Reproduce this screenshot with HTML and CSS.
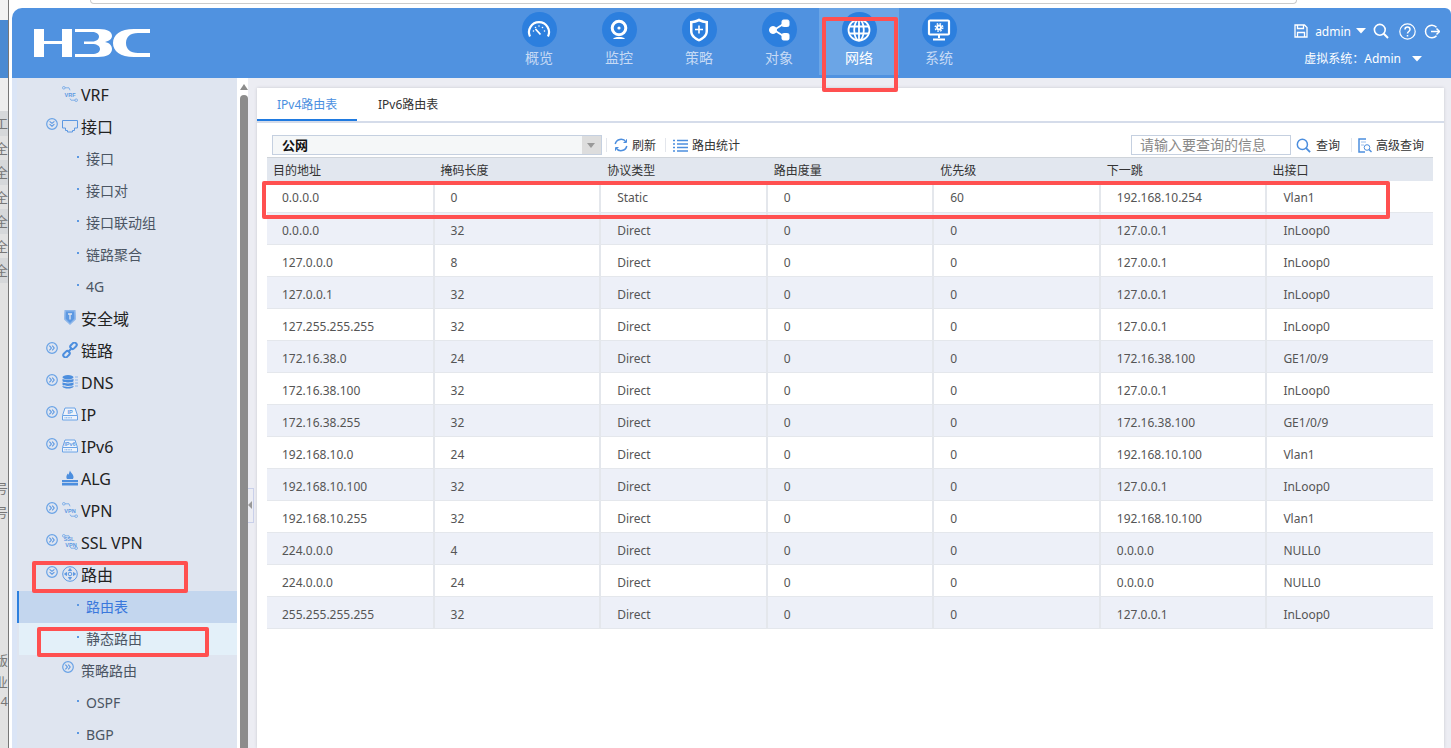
FILE: index.html
```html
<!DOCTYPE html>
<html>
	<head>
		<meta charset="UTF-8">
		<title>路由表</title>
		<link rel="stylesheet" href="styles.css">
	</head>
	<body>
		<svg class="defs" width="0" height="0">
			<symbol id="open" viewBox="0 0 12 12">
				<circle cx="6" cy="6" r="5.3" fill="none" stroke="#6aa3e6" stroke-width="1.2"/>
				<path d="M3.6 3.4 6 5.4l2.400-2M3.6 6.200 6 8.200l2.400-2" fill="none" stroke="#5c98e2" stroke-width="1.100"/>
			</symbol>
			<symbol id="closed" viewBox="0 0 12 12">
				<circle cx="6" cy="6" r="5.3" fill="none" stroke="#6aa3e6" stroke-width="1.2"/>
				<path d="M3.4 3.6 5.4 6l-2 2.400M6.200 3.600 8.200 6l-2 2.400" fill="none" stroke="#5c98e2" stroke-width="1.100"/>
			</symbol>
			<symbol id="ic-search" viewBox="0 0 16 16">
				<circle cx="6.800" cy="6.800" r="5.400" fill="none" stroke="currentColor" stroke-width="1.600"/>
				<path d="m10.800 10.800 4.200 4.200" stroke="currentColor" stroke-width="2"/>
			</symbol>
			<symbol id="caret" viewBox="0 0 10 6">
				<path d="M0 0h10L5 5.500z" fill="#fff"/>
			</symbol>
			<symbol id="ic-drive" viewBox="0 0 16 14">
				<path d="M3 1h10l2.500 7.500v4.500H.5V8.500z" fill="#eef3fb" stroke="#6aa3e6"/>
				<path d="M.8 8.500h14.400" stroke="#6aa3e6"/>
				<path d="M2.500 10.800h8" stroke="#6aa3e6" stroke-dasharray="1 .6"/>
			</symbol>
			<symbol id="ic-tag" viewBox="0 0 16 16">
				<circle cx="1.800" cy="1.800" r="1.300" fill="none" stroke="#6aa3e6" stroke-width=".8"/>
				<circle cx="14.200" cy="14.200" r="1.300" fill="none" stroke="#6aa3e6" stroke-width=".8"/>
				<path d="M3 1.800h4l1 2.500M8 12.500l1 1.700h4" fill="none" stroke="#6aa3e6" stroke-width=".8"/>
			</symbol>
		</svg>

		<div class="desk">
			<div class="desk-tabs"></div>
			<div class="desk-blue"></div>
			<div class="desk-gap"></div>
			<div class="desk-row desk-alt">工</div>
			<div class="desk-row">全</div>
			<div class="desk-row desk-alt">全</div>
			<div class="desk-row">全</div>
			<div class="desk-row desk-alt">全</div>
			<div class="desk-row">全</div>
			<div class="desk-row desk-alt">全</div>
			<div class="desk-blank"></div>
			<div class="desk-row">号</div>
			<div class="desk-row desk-tall">号</div>
			<div class="desk-blank2"></div>
			<div class="desk-row">版</div>
			<div class="desk-row desk-low">业</div>
			<div class="desk-row desk-low">4</div>
		</div>

		<div class="shell">
			<div class="urlbar"></div>

			<div class="header">
				<div class="logo">
					<svg width="118" height="30" viewBox="0 0 118 30">
						<path fill="#fff" d="M0 1h10v12h18V1h10v28H28V16H10v13H0z"/>
						<path fill="#fff" d="M41 1H65C74 1 78 4 78 8C78 11 75 13 71 14C76 15 78 18 78 21C78 26 73 29 64 29H41V26H58C63 26 66 24 66 21C66 18 63 16 58 16H50V13.500H58C63 13.500 65 11 65 8.500C65 6 62 4 58 4H41Z"/>
						<path fill="#fff" d="M116 1H100C86 1 79 7 79 15C79 23 86 29 100 29H116V25H104C96 25 92 21 92 15C92 9 96 5 104 5H116Z"/>
					</svg>
				</div>
				<div class="nav">
					<div class="nav-item">
						<span class="nav-ball">
							<svg width="24" height="24" viewBox="0 0 24 24" fill="none" stroke="#fff">
								<path d="M3 18.500a10 10 0 1 1 18 0" stroke-width="2.200"/>
								<path d="M6.500 13h.01M8.500 9.500h.01M12 8h.01M15.500 9.500h.01M17.500 13h.01" stroke-width="1.600" stroke-linecap="round"/>
								<path d="m8.500 11 5 5.500" stroke-width="1.800"/>
							</svg>
						</span>
						<span>概览</span>
					</div>
					<div class="nav-item">
						<span class="nav-ball">
							<svg width="24" height="24" viewBox="0 0 24 24" fill="none" stroke="#fff">
								<circle cx="12" cy="10" r="6.800" stroke-width="3"/>
								<circle cx="12" cy="10" r="1.600" fill="#fff" stroke="none"/>
								<path d="M6 21c1-1.600 3-2 6-2s5 .4 6 2z" fill="#fff" stroke="none"/>
							</svg>
						</span>
						<span>监控</span>
					</div>
					<div class="nav-item">
						<span class="nav-ball">
							<svg width="24" height="26" viewBox="0 0 24 26" fill="none" stroke="#fff">
								<path d="M12 1.500c3 1.600 6 2.400 9 2.500v10c0 5-4 8.500-9 10.500-5-2-9-5.500-9-10.500V4c3-.1 6-.9 9-2.500z" fill="#fff" stroke="none"/>
								<path d="M12 4.500c2.300 1 4.500 1.600 6.500 1.800v8c0 3.500-3 6-6.500 7.700-3.500-1.700-6.500-4.200-6.500-7.700v-8c2-.2 4.200-.8 6.500-1.800z" fill="#2c7fde" stroke="none"/>
								<path d="M12 8.500v8M8 12.500h8" stroke-width="1.600"/>
							</svg>
						</span>
						<span>策略</span>
					</div>
					<div class="nav-item">
						<span class="nav-ball">
							<svg width="24" height="24" viewBox="0 0 24 24" fill="#fff" stroke="#fff">
								<path d="m7 12 11-7M7 12l11 7" stroke-width="1.800" fill="none"/>
								<circle cx="6" cy="12" r="3.500"/>
								<rect x="15" y="2" width="7" height="6.500" rx="1.500"/>
								<rect x="15" y="15.500" width="7" height="6.500" rx="1.500"/>
							</svg>
						</span>
						<span>对象</span>
					</div>
					<div class="nav-item nav-on">
						<span class="nav-ball">
							<svg width="24" height="24" viewBox="0 0 24 24" fill="none" stroke="#fff" stroke-width="1.800">
								<circle cx="12" cy="12" r="10.500"/>
								<ellipse cx="12" cy="12" rx="4.800" ry="10.500"/>
								<path d="M12 1.500v21M2 8.500h20M2 15.500h20"/>
							</svg>
						</span>
						<span>网络</span>
					</div>
					<div class="nav-item">
						<span class="nav-ball">
							<svg width="24" height="24" viewBox="0 0 24 24" fill="none" stroke="#fff">
								<rect x="2" y="2.500" width="20" height="14" rx="1" stroke-width="2.200"/>
								<path d="M12 16.500v3.500M6 21.500h12" stroke-width="2"/>
								<circle cx="12" cy="9.500" r="2" stroke-width="2"/>
								<circle cx="12" cy="9.500" r="3.800" stroke-width="1.400" stroke-dasharray="1.600 1.400"/>
							</svg>
						</span>
						<span>系统</span>
					</div>
				</div>
				<div class="user">
					<div class="user-top">
						<svg class="user-save" width="14" height="14" viewBox="0 0 14 14" fill="none" stroke="#fff" stroke-width="1.300">
							<path d="M1 1h9.500L13 3.500V13H1z"/>
							<path d="M3.500 1v3.500h6V1M3.500 13V8.500h7V13"/>
						</svg>
						<span class="user-name">admin</span>
						<svg class="user-caret" width="10" height="6"><use href="#caret"/></svg>
						<svg class="user-find" width="16" height="16"><use href="#ic-search"/></svg>
						<svg class="user-help" width="17" height="17" viewBox="0 0 17 17" fill="none" stroke="#fff" stroke-width="1.200">
							<circle cx="8.500" cy="8.500" r="7.700"/>
							<path d="M6 6.500c0-3.200 5-3.200 5 0 0 2-2.500 2-2.500 4" stroke-width="1.500"/>
							<path d="M8.500 12v1.500" stroke-width="1.500"/>
						</svg>
						<svg class="user-out" width="16" height="15" viewBox="0 0 16 15" fill="none" stroke="#fff" stroke-width="1.500">
							<path d="M12.500 3.300A6.300 6.300 0 1 0 12.500 11.700"/>
							<path d="M7 7.500h8.500"/>
							<path d="M12.500 4.500l3 3-3 3"/>
						</svg>
					</div>
					<div class="user-vsys">
						<span>虚拟系统：Admin</span>
						<svg width="10" height="6"><use href="#caret"/></svg>
					</div>
				</div>
			</div>

			<div class="work">
				<div class="side">
					<div class="tree-row">
						<span class="tog"></span>
						<svg class="ico" width="16" height="16" viewBox="0 0 16 16">
							<use href="#ic-tag" width="16" height="16"/>
							<text class="ico-text" x="8" y="10.500">VRF</text>
						</svg>
						<span>VRF</span>
					</div>
					<div class="tree-row">
						<svg class="tog" width="12" height="12"><use href="#open"/></svg>
						<svg class="ico" width="16" height="14" viewBox="0 0 16 14" fill="none" stroke="#5c98e2">
							<path d="M.5 1.500h15v7.500h-3v2.500h-2v1.500h-5v-1.500h-2V9h-3z"/>
						</svg>
						<span>接口</span>
					</div>
					<div class="sub-row"><i></i>接口</div>
					<div class="sub-row"><i></i>接口对</div>
					<div class="sub-row"><i></i>接口联动组</div>
					<div class="sub-row"><i></i>链路聚合</div>
					<div class="sub-row"><i></i>4G</div>
					<div class="tree-row">
						<span class="tog"></span>
						<svg class="ico" width="16" height="17" viewBox="0 0 16 17">
							<path d="M2.500 1h11c.4 3 .4 7 .4 9.500L8 16l-5.900-5.500C2.100 8 2.100 4 2.500 1z" fill="#8db6ea"/>
							<path d="M4 2.500h8c.3 2.500.3 5.500.3 7.300L8 14l-4.300-4.200C3.700 8 3.700 5 4 2.500z" fill="#5c98e2"/>
							<path d="M6 5h4M8 5v5.500" stroke="#dfe5f0" stroke-width="1.300"/>
						</svg>
						<span>安全域</span>
					</div>
					<div class="tree-row">
						<svg class="tog" width="12" height="12"><use href="#closed"/></svg>
						<svg class="ico" width="16" height="16" viewBox="0 0 16 16" fill="none" stroke="#4c8ede" stroke-width="2">
							<rect x="8" y="1.500" width="7" height="4.500" rx="2" transform="rotate(-45 11.500 3.750)"/>
							<rect x="1" y="10" width="7" height="4.500" rx="2" transform="rotate(-45 4.500 12.250)"/>
							<path d="m6 10 4-4"/>
						</svg>
						<span>链路</span>
					</div>
					<div class="tree-row">
						<svg class="tog" width="12" height="12"><use href="#closed"/></svg>
						<svg class="ico" width="16" height="14" viewBox="0 0 16 14" fill="#4c8ede">
							<ellipse cx="6" cy="2.300" rx="5.500" ry="2.200"/>
							<path d="M.5 3.800c1 1.500 10 1.500 11 0v2.400c-1 1.600-10 1.600-11 0zM.5 7.300c1 1.500 10 1.500 11 0v2.400c-1 1.600-10 1.600-11 0zM.5 10.800c1 1.500 10 1.500 11 0v.9c-1 2.400-10 2.400-11 0z"/>
							<path d="M13 2h3M13 5h3M13 8h3M13 11h3" stroke="#8db6ea" stroke-width="1.200"/>
						</svg>
						<span>DNS</span>
					</div>
					<div class="tree-row">
						<svg class="tog" width="12" height="12"><use href="#closed"/></svg>
						<svg class="ico" width="16" height="14" viewBox="0 0 16 14">
							<use href="#ic-drive" width="16" height="14"/>
							<text class="ico-text" x="8" y="7">IP</text>
						</svg>
						<span>IP</span>
					</div>
					<div class="tree-row">
						<svg class="tog" width="12" height="12"><use href="#closed"/></svg>
						<svg class="ico" width="16" height="14" viewBox="0 0 16 14">
							<use href="#ic-drive" width="16" height="14"/>
							<text class="ico-text" x="8" y="7">IPv6</text>
						</svg>
						<span>IPv6</span>
					</div>
					<div class="tree-row">
						<span class="tog"></span>
						<svg class="ico" width="16" height="16" viewBox="0 0 16 16" fill="#4c8ede">
							<path d="M8 .5c.5 2 3.500 3.500 3.500 6.500 0 1-.3 1.500-.6 2H5c-.3-.5-.6-1-.6-2 0-1.500.9-2.500 1.300-3.500.4.600.6 1 .9 1.300C6.800 3.500 7.600 2 8 .5z"/>
							<path d="M0 10h16v2.300H0zM0 13h16v2.500H0z"/>
						</svg>
						<span>ALG</span>
					</div>
					<div class="tree-row">
						<svg class="tog" width="12" height="12"><use href="#closed"/></svg>
						<svg class="ico" width="16" height="16" viewBox="0 0 16 16">
							<use href="#ic-tag" width="16" height="16"/>
							<text class="ico-text" x="8" y="10.500">VPN</text>
						</svg>
						<span>VPN</span>
					</div>
					<div class="tree-row">
						<svg class="tog" width="12" height="12"><use href="#closed"/></svg>
						<svg class="ico" width="16" height="16" viewBox="0 0 16 16">
							<use href="#ic-tag" width="16" height="16"/>
							<text class="ico-text" x="7" y="7">SSL</text>
							<text class="ico-text" x="9" y="12.500">VPN</text>
						</svg>
						<span>SSL VPN</span>
					</div>
					<div class="tree-row">
						<svg class="tog" width="12" height="12"><use href="#open"/></svg>
						<svg class="ico" width="16" height="16" viewBox="0 0 16 16" fill="none" stroke="#5c98e2">
							<circle cx="8" cy="8" r="7.300"/>
							<path d="M8 2.500 9.500 4.500h-3zM8 13.500 6.500 11.500h3zM2.500 8 4.500 6.500v3zM13.500 8 11.500 9.500v-3z" fill="#5c98e2"/>
							<circle cx="8" cy="8" r="1.800"/>
						</svg>
						<span>路由</span>
					</div>
					<div class="sub-row sub-on"><i></i>路由表</div>
					<div class="sub-row sub-near"><i></i>静态路由</div>
					<div class="group-row">
						<svg class="tog" width="12" height="12"><use href="#closed"/></svg>
						<span>策略路由</span>
					</div>
					<div class="sub-row"><i></i>OSPF</div>
					<div class="sub-row"><i></i>BGP</div>
				</div>

				<div class="bar">
					<div class="bar-up"></div>
					<div class="bar-thumb"></div>
				</div>

				<div class="main">
					<div class="card">
						<div class="tabs">
							<div class="tab tab-on">IPv4路由表</div>
							<div class="tab">IPv6路由表</div>
						</div>
						<div class="tools">
							<div class="pick">
								<span class="pick-text">公网</span>
								<span class="pick-btn"></span>
							</div>
							<span class="sep"></span>
							<svg class="tool-ico" width="14" height="14" viewBox="0 0 14 14" fill="none" stroke="#4c8ede" stroke-width="1.500">
								<path d="M1.200 6A6 6 0 0 1 12 4M12.800 8A6 6 0 0 1 2 10"/>
								<path d="M12.500 1.300V4.500H9.500M1.500 12.700V9.500h3" stroke-width="1"/>
							</svg>
							<span class="tool">刷新</span>
							<span class="sep"></span>
							<svg class="tool-ico" width="15" height="13" viewBox="0 0 15 13" stroke="#4c8ede" stroke-width="1.400">
								<path d="M0 1.500h2M0 5h2M0 8.500h2M0 12h2M4 1.500h11M4 5h11M4 8.500h11M4 12h11"/>
							</svg>
							<span class="tool">路由统计</span>
							<span class="tools-gap"></span>
							<div class="find">请输入要查询的信息</div>
							<svg class="find-ico" width="15" height="15"><use href="#ic-search"/></svg>
							<span class="tool">查询</span>
							<span class="sep sep-r"></span>
							<svg class="tool-ico" width="14" height="15" viewBox="0 0 14 15" fill="none" stroke="#4c8ede">
								<path d="M8 1H1v13h6" stroke-width="1.500"/>
								<path d="M3 4h5M3 7h3" stroke="#9cc0ee"/>
								<circle cx="9" cy="9.500" r="2.800"/>
								<path d="m11 11.500 2.500 2.500" stroke-width="1.400"/>
							</svg>
							<span class="tool">高级查询</span>
						</div>
						<table class="grid">
							<thead>
								<tr><th>目的地址</th><th>掩码长度</th><th>协议类型</th><th>路由度量</th><th>优先级</th><th>下一跳</th><th>出接口</th></tr>
							</thead>
							<tbody>
								<tr><td>0.0.0.0</td><td>0</td><td>Static</td><td>0</td><td>60</td><td>192.168.10.254</td><td>Vlan1</td></tr>
								<tr><td>0.0.0.0</td><td>32</td><td>Direct</td><td>0</td><td>0</td><td>127.0.0.1</td><td>InLoop0</td></tr>
								<tr><td>127.0.0.0</td><td>8</td><td>Direct</td><td>0</td><td>0</td><td>127.0.0.1</td><td>InLoop0</td></tr>
								<tr><td>127.0.0.1</td><td>32</td><td>Direct</td><td>0</td><td>0</td><td>127.0.0.1</td><td>InLoop0</td></tr>
								<tr><td>127.255.255.255</td><td>32</td><td>Direct</td><td>0</td><td>0</td><td>127.0.0.1</td><td>InLoop0</td></tr>
								<tr><td>172.16.38.0</td><td>24</td><td>Direct</td><td>0</td><td>0</td><td>172.16.38.100</td><td>GE1/0/9</td></tr>
								<tr><td>172.16.38.100</td><td>32</td><td>Direct</td><td>0</td><td>0</td><td>127.0.0.1</td><td>InLoop0</td></tr>
								<tr><td>172.16.38.255</td><td>32</td><td>Direct</td><td>0</td><td>0</td><td>172.16.38.100</td><td>GE1/0/9</td></tr>
								<tr><td>192.168.10.0</td><td>24</td><td>Direct</td><td>0</td><td>0</td><td>192.168.10.100</td><td>Vlan1</td></tr>
								<tr><td>192.168.10.100</td><td>32</td><td>Direct</td><td>0</td><td>0</td><td>127.0.0.1</td><td>InLoop0</td></tr>
								<tr><td>192.168.10.255</td><td>32</td><td>Direct</td><td>0</td><td>0</td><td>192.168.10.100</td><td>Vlan1</td></tr>
								<tr><td>224.0.0.0</td><td>4</td><td>Direct</td><td>0</td><td>0</td><td>0.0.0.0</td><td>NULL0</td></tr>
								<tr><td>224.0.0.0</td><td>24</td><td>Direct</td><td>0</td><td>0</td><td>0.0.0.0</td><td>NULL0</td></tr>
								<tr><td>255.255.255.255</td><td>32</td><td>Direct</td><td>0</td><td>0</td><td>127.0.0.1</td><td>InLoop0</td></tr>
							</tbody>
						</table>
					</div>
				</div>
			</div>
		</div>

		<div class="fold"></div>

		<!-- red boxes drawn on top of the screenshot -->
		<div class="mark mark-nav"></div>
		<div class="mark mark-row"></div>
		<div class="mark mark-route"></div>
		<div class="mark mark-static"></div>
	</body>
</html>
```

FILE: styles.css
```css
html, body {
	height: 100%;
}

body {
	margin: 0;
	display: flex;
	height: 748px;
	overflow: hidden;
	background-color: #fff;
	font-family: "Noto Sans", "Noto Sans CJK SC", sans-serif;
	font-size: 12px;
	color: #444;
}

.defs {
	position: absolute;
}

/* window behind, only a sliver of it shows */
.desk {
	flex: none;
	width: 8px;
	border-right: 1px solid #777;
	overflow: hidden;
	background-color: #e2e2e2;
	color: #777;
}
.desk-tabs {
	height: 20px;
	background-color: #f2f2f2;
}
.desk-blue {
	height: 58px;
	background-color: #4a8ad2;
}
.desk-gap {
	height: 33px;
	background-color: #eee;
}
.desk-row {
	display: flex;
	justify-content: flex-end;
	height: 24.5px;
	line-height: 24.5px;
	font-size: 13px;
	white-space: nowrap;
}
.desk-alt {
	background-color: #d6d8da;
}
.desk-tall {
	height: 28px;
}
.desk-low {
	height: 19px;
	line-height: 19px;
}
.desk-blank {
	height: 193px;
}
.desk-blank2 {
	height: 120px;
}

.shell {
	flex: 1;
	min-width: 0;
	display: flex;
	flex-direction: column;
	padding-left: 3px;
}

.urlbar {
	flex: none;
	height: 3px;
	margin: 0 154px 4px 78px;
	border: 1px solid #ccc;
	border-top: none;
	border-radius: 0 0 8px 8px;
}

.header {
	flex: none;
	display: flex;
	height: 70px;
	background-color: #5092e0;
	border-radius: 10px 6px 0 0;
}

.logo {
	width: 487px;
	padding: 20px 0 0 22px;
	box-sizing: border-box;
}

.nav {
	display: flex;
}
.nav-item {
	display: flex;
	flex-direction: column;
	align-items: center;
	width: 80px;
	height: 67px;
	padding-top: 4px;
	box-sizing: border-box;
	font-size: 14px;
	line-height: 20px;
	color: #c6daf5;
}
.nav-on {
	background-color: #6ba5e6;
	color: #fff;
}
.nav-ball {
	display: flex;
	align-items: center;
	justify-content: center;
	width: 35px;
	height: 35px;
	margin-bottom: 1px;
	border-radius: 50%;
	background-color: #2c7fde;
}

.user {
	flex: 1;
	display: flex;
	flex-direction: column;
	align-items: flex-end;
	color: #fff;
}
.user-top {
	display: flex;
	align-items: center;
	height: 18px;
	margin-top: 14px;
	padding-right: 11px;
}
.user-name {
	margin: 0 5px 0 7px;
}
.user-caret {
	margin-right: 7px;
}
.user-find {
	color: #fff;
	margin-right: 10px;
}
.user-help {
	margin-right: 8px;
}
.user-vsys {
	display: flex;
	align-items: center;
	gap: 11px;
	margin-top: 10px;
	padding-right: 29px;
	line-height: 18px;
}

.work {
	flex: 1;
	min-height: 0;
	display: flex;
}

.side {
	flex: none;
	width: 220px;
	border-left: 5px solid #dbe5f6;
	overflow: hidden;
	background-color: #dfe5f0;
	padding-top: 1px;
}

.tree-row {
	display: flex;
	align-items: center;
	height: 32px;
	padding-left: 29px;
	font-size: 16px;
	line-height: 20px;
	color: #222;
}
.tog {
	flex: none;
	width: 12px;
	height: 12px;
	margin: -7px 4px 0 0;
}
.ico {
	flex: none;
	margin-right: 3px;
	margin-top: -3px;
}
.ico-text {
	font-family: "Liberation Sans", sans-serif;
	font-size: 5.5px;
	font-weight: bold;
	text-anchor: middle;
	fill: #5c98e2;
}
.sub-row {
	display: flex;
	align-items: center;
	height: 32px;
	box-sizing: border-box;
	padding: 0 0 1px 60px;
	font-size: 14px;
	line-height: 20px;
	color: #4b5563;
}
.sub-row i {
	width: 2px;
	height: 2px;
	margin-right: 7px;
	margin-top: -3px;
	background-color: #5c98e2;
}
.sub-on {
	border-left: 2px solid #2c7fde;
	padding-left: 58px;
	background-color: #c3d6ee;
	color: #3a78dc;
}
.sub-near {
	margin-left: 2px;
	padding-left: 58px;
	background-color: #e3f0f9;
}
.group-row {
	display: flex;
	align-items: center;
	height: 32px;
	box-sizing: border-box;
	padding: 0 0 1px 45px;
	font-size: 14px;
	line-height: 20px;
	color: #4b5563;
}
.group-row .tog {
	margin-right: 7px;
}

.bar {
	flex: none;
	width: 11px;
	box-sizing: border-box;
	padding-left: 3px;
	background-color: #fff;
}
.bar-up {
	width: 0;
	height: 0;
	margin: 6px 0 5px;
	border-left: 4px solid transparent;
	border-right: 4px solid transparent;
	border-bottom: 6px solid #8c8c8c;
}
.bar-thumb {
	height: 660px;
	border-radius: 4px 4px 0 0;
	background-color: #8c8c8c;
}

.main {
	flex: 1;
	min-width: 0;
	padding: 10px 7px 0 9px;
	background-color: #ecedf3;
}
.card {
	height: 100%;
	background-color: #fff;
	box-shadow: 0 0 3px #c8c8d0;
}

.tabs {
	display: flex;
	height: 33px;
	border-bottom: 2px solid #d5dcea;
}
.tab {
	width: 100px;
	height: 33px;
	box-sizing: border-box;
	padding-left: 20px;
	line-height: 33px;
	color: #333;
}
.tab-on {
	border-bottom: 2px solid #1f7ae0;
	color: #4a8fe0;
}
.tab + .tab {
	padding-left: 21px;
}

.tools {
	display: flex;
	align-items: center;
	height: 20px;
	margin: 12px 20px 2px 15px;
	color: #333;
}
.pick {
	display: flex;
	width: 330px;
	height: 20px;
	box-sizing: border-box;
	border: 1px solid #c5d0e0;
	background-color: #f5f7f8;
}
.pick-text {
	flex: 1;
	padding-left: 9px;
	font-size: 13px;
	font-weight: bold;
	line-height: 18px;
	color: #111;
}
.pick-btn {
	position: relative;
	width: 19px;
	background-color: #ddd;
}
.pick-btn::after {
	content: "";
	position: absolute;
	left: 5px;
	top: 7px;
	border-left: 4px solid transparent;
	border-right: 4px solid transparent;
	border-top: 5px solid #999;
}
.sep {
	width: 1px;
	height: 14px;
	margin: 0 7px 0 4px;
	background-color: #e3e6ec;
}
.sep + .tool-ico + .tool + .sep {
	margin: 0 7px 0 9px;
}
.sep-r {
	margin: 0 6px 0 11px;
}
.tool-ico {
	flex: none;
	margin-right: 4px;
}
.tool {
	white-space: nowrap;
}
.tools-gap {
	flex: 1;
}
.find {
	width: 160px;
	height: 20px;
	box-sizing: border-box;
	border: 1px solid #c5d0e0;
	padding-left: 8px;
	font-size: 14px;
	line-height: 18px;
	color: #888;
	white-space: nowrap;
}
.find-ico {
	flex: none;
	margin: 0 5px;
	color: #4c8ede;
}

.grid {
	width: 1166px;
	margin-left: 10px;
	border-collapse: collapse;
	table-layout: fixed;
}
.grid th {
	height: 23px;
	padding: 1px 0 0 7px;
	box-sizing: border-box;
	border-top: 1px solid #cfd4da;
	background-color: #e2e7ef;
	font-weight: normal;
	text-align: left;
	color: #333;
}
.grid th:first-child, .grid th:last-child {
	padding-left: 6px;
}
.grid td {
	height: 32px;
	padding: 3px 0 0 16px;
	border-right: 2px solid #e4e7ec;
	border-bottom: 1px solid #e4e7ec;
	box-sizing: border-box;
	color: #555;
}
.grid td:first-child {
	padding-left: 15px;
}
.grid td:last-child {
	border-right: none;
}
.grid tbody tr:nth-child(even) td {
	background-color: #edf0f8;
}

.fold {
	position: absolute;
	left: 248px;
	top: 488px;
	width: 5px;
	height: 33px;
	border: 1px solid #c9d0ea;
	border-left: none;
}
.fold::after {
	content: "";
	position: absolute;
	left: 0;
	top: 12px;
	border-top: 4px solid transparent;
	border-bottom: 4px solid transparent;
	border-right: 4px solid #999;
}

.mark {
	position: absolute;
	box-sizing: border-box;
	border: 4px solid #ff5050;
	border-radius: 2px;
}
.mark-nav {
	left: 822px;
	top: 17px;
	width: 76px;
	height: 75px;
}
.mark-row {
	left: 262px;
	top: 181px;
	width: 1128px;
	height: 38px;
}
.mark-route {
	left: 32px;
	top: 561px;
	width: 156px;
	height: 32px;
}
.mark-static {
	left: 37px;
	top: 627px;
	width: 172px;
	height: 30px;
}
```
